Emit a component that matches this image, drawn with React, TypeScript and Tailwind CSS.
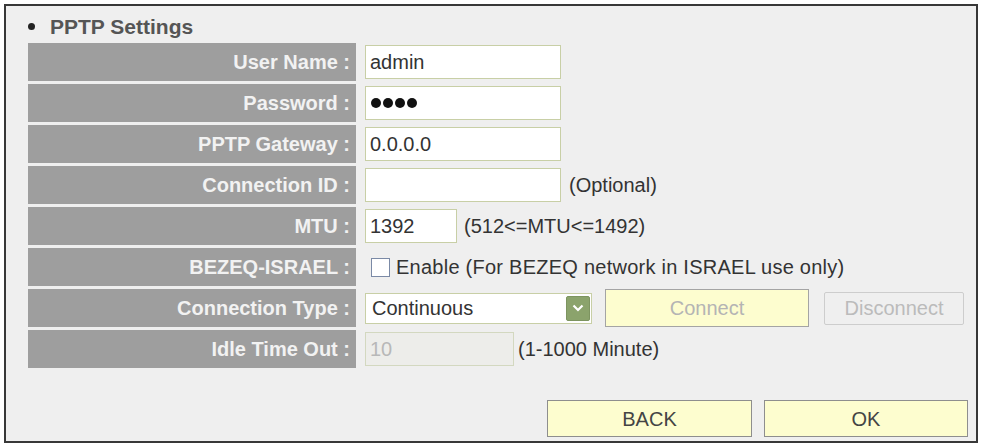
import React from 'react'

const font = { fontFamily: '"Liberation Sans", Arial, sans-serif' }

function Label({ children }: { children: React.ReactNode }) {
    return (
        <div className="flex w-[328px] shrink-0 items-center justify-end bg-[#9e9e9e] pr-[6px] text-[20px] font-bold text-[#f2f2f2]">
            {children}
        </div>
    )
}

function Field({ value, className = 'w-[196px]', muted = false }: { value: React.ReactNode; className?: string; muted?: boolean }) {
    return (
        <div
            className={`flex h-[34px] items-center border px-[4px] text-[20px] ${className} ${
                muted ? 'border-[#d3d8c0] bg-[#ededea] text-[#b8b8b8]' : 'border-[#c8cfa6] bg-white text-[#333]'
            }`}
        >
            {value}
        </div>
    )
}

function Row({ label, children }: { label: string; children: React.ReactNode }) {
    return (
        <div className="flex h-[38px]">
            <Label>{label}</Label>
            <div className="ml-[9px] flex items-center text-[20px] text-[#333]">{children}</div>
        </div>
    )
}

export default function App() {
    return (
        <div className="h-[446px] w-[982px] bg-white pl-[4px] pt-[4px]" style={font}>
            <div className="flex h-[439px] w-[974px] flex-col border-2 border-[#383838] bg-[#efefef] pl-[22px] pr-[8px]">
                <div className="flex h-[37px] items-center pt-[4px] text-[21px] font-bold text-[#555]">
                    <span className="mr-[15px] h-[7px] w-[7px] rounded-full bg-[#222]" />
                    PPTP Settings
                </div>

                <div className="flex flex-col gap-[3px]">
                    <Row label="User Name :">
                        <Field value="admin" />
                    </Row>
                    <Row label="Password :">
                        <Field
                            value={
                                <span className="ml-[1px] flex gap-[2px]">
                                    <span className="h-[10px] w-[10px] rounded-full bg-[#111]" />
                                    <span className="h-[10px] w-[10px] rounded-full bg-[#111]" />
                                    <span className="h-[10px] w-[10px] rounded-full bg-[#111]" />
                                    <span className="h-[10px] w-[10px] rounded-full bg-[#111]" />
                                </span>
                            }
                        />
                    </Row>
                    <Row label="PPTP Gateway :">
                        <Field value="0.0.0.0" />
                    </Row>
                    <Row label="Connection ID :">
                        <Field value="" />
                        <span className="ml-[8px]">(Optional)</span>
                    </Row>
                    <Row label="MTU :">
                        <Field value="1392" className="w-[92px]" />
                        <span className="ml-[7px]">(512&lt;=MTU&lt;=1492)</span>
                    </Row>
                    <Row label="BEZEQ-ISRAEL :">
                        <span className="ml-[6px] h-[19px] w-[19px] border border-[#7b8aa6] bg-white" />
                        <span className="ml-[6px] tracking-[0.25px]">Enable (For BEZEQ network in ISRAEL use only)</span>
                    </Row>
                    <Row label="Connection Type :">
                        <div className="flex h-[31px] w-[227px] items-center justify-between border border-[#c8cfa6] bg-white pl-[6px] pr-[1px]">
                            <span>Continuous</span>
                            <span className="flex h-[25px] w-[24px] items-center justify-center rounded-[2px] border border-[#7d9460] bg-[#8ba36c]">
                                <svg width="12" height="8" viewBox="0 0 12 8">
                                    <path d="M1.5 1.5 L6 6 L10.5 1.5" fill="none" stroke="#fff" strokeWidth="2.2" />
                                </svg>
                            </span>
                        </div>
                        <div className="ml-[13px] flex h-[38px] w-[204px] items-center justify-center border border-[#a4a4a4] bg-[#fdfdcf] text-[#b4b4b4]">
                            Connect
                        </div>
                        <div className="ml-[15px] flex h-[33px] w-[140px] items-center justify-center rounded-[2px] border border-[#cdcdcd] bg-[#efefef] text-[#bbb]">
                            Disconnect
                        </div>
                    </Row>
                    <Row label="Idle Time Out :">
                        <Field value="10" className="w-[149px]" muted />
                        <span className="ml-[4px]">(1-1000 Minute)</span>
                    </Row>
                </div>

                <div className="mt-[32px] flex justify-end gap-[12px] text-[20px] text-[#444]">
                    <div className="flex h-[37px] w-[205px] items-center justify-center border border-[#8e8e8e] bg-[#fdfdcf]">BACK</div>
                    <div className="flex h-[37px] w-[204px] items-center justify-center border border-[#8e8e8e] bg-[#fdfdcf]">OK</div>
                </div>
            </div>
        </div>
    )
}
